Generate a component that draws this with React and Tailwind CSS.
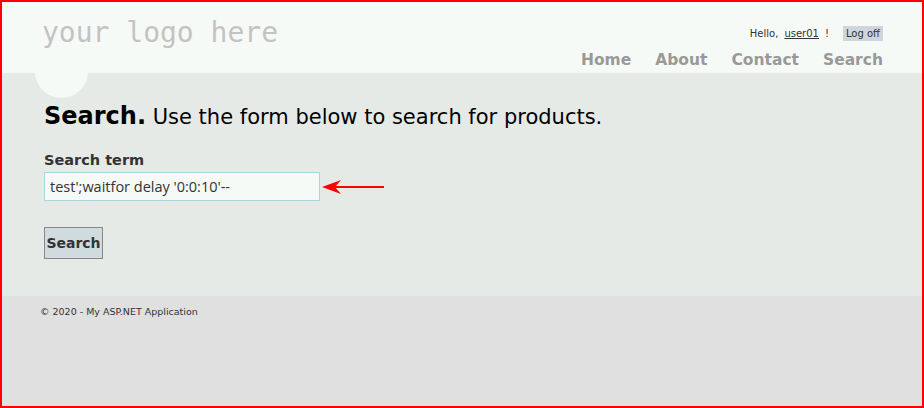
import React from "react";

const sans = "font-['DejaVu_Sans',sans-serif]";

function Arrow() {
  return (
    <svg width="66" height="16" viewBox="0 0 66 16" className="ml-[1px]">
      <line x1="10" y1="8" x2="63" y2="8" stroke="#f00" strokeWidth="2" />
      <path d="M1 8 L20 1 L14 8 L20 15 Z" fill="#f00" />
    </svg>
  );
}

export default function App() {
  return (
    <div className={`h-[408px] w-[924px] border-2 border-[#ff0000] flex flex-col overflow-hidden ${sans}`}>
      {/* Header */}
      <header className="relative h-[71px] shrink-0 bg-[#f6faf7] flex justify-between pl-[40px] pr-[39px]">
        <div className="pt-[14px] text-[28px] leading-[34px] text-[#c3c3c3] font-['DejaVu_Sans_Mono',monospace]">
          your logo here
        </div>
        <div className="flex flex-col items-end pt-[24px]">
          <div className="flex items-center text-[10px] leading-[13px] text-[#333]">
            <span>Hello,</span>
            <a className="ml-[6px] underline text-[#333]">user01</a>
            <span className="ml-[6px]">!</span>
            <span className="ml-[14px] bg-[#cdd6dc] px-[3px] py-[1px]">Log off</span>
          </div>
          <nav className="mt-[9px] flex gap-[24px] text-[15.5px] leading-[20px] font-bold text-[#999]">
            <span>Home</span>
            <span>About</span>
            <span>Contact</span>
            <span>Search</span>
          </nav>
        </div>
        <div className="absolute left-[33px] top-[43px] h-[53px] w-[53px] rounded-full bg-[#f6faf7]" />
      </header>

      {/* Main */}
      <main className="h-[223px] shrink-0 bg-[#e6eae7] pl-[42px] pt-[28px]">
        <h1 className="text-[21px] leading-[30px] text-black">
          <span className="text-[24px] font-bold">Search.</span> Use the form below to search for products.
        </h1>
        <label className="block mt-[19px] text-[14.5px] leading-[18px] font-bold text-[#333]">Search term</label>
        <div className="mt-[3px] flex items-center">
          <input
            defaultValue="test';waitfor delay '0:0:10'--"
            className="h-[29px] w-[276px] border border-[#a9d5e1] bg-[#f6faf7] px-[5px] text-[14.5px] text-[#333] outline-none font-['Open_Sans',sans-serif]"
          />
          <Arrow />
        </div>
        <button className={`mt-[26px] h-[32px] w-[59px] border border-[#888] bg-[#d0dbe0] text-[14px] font-bold text-[#333] ${sans}`}>
          Search
        </button>
      </main>

      {/* Footer */}
      <footer className="flex-1 bg-[#e0e0e0] pl-[38px] pt-[10px]">
        <p className="text-[9.5px] leading-[12px] text-[#333]">© 2020 - My ASP.NET Application</p>
      </footer>
    </div>
  );
}
